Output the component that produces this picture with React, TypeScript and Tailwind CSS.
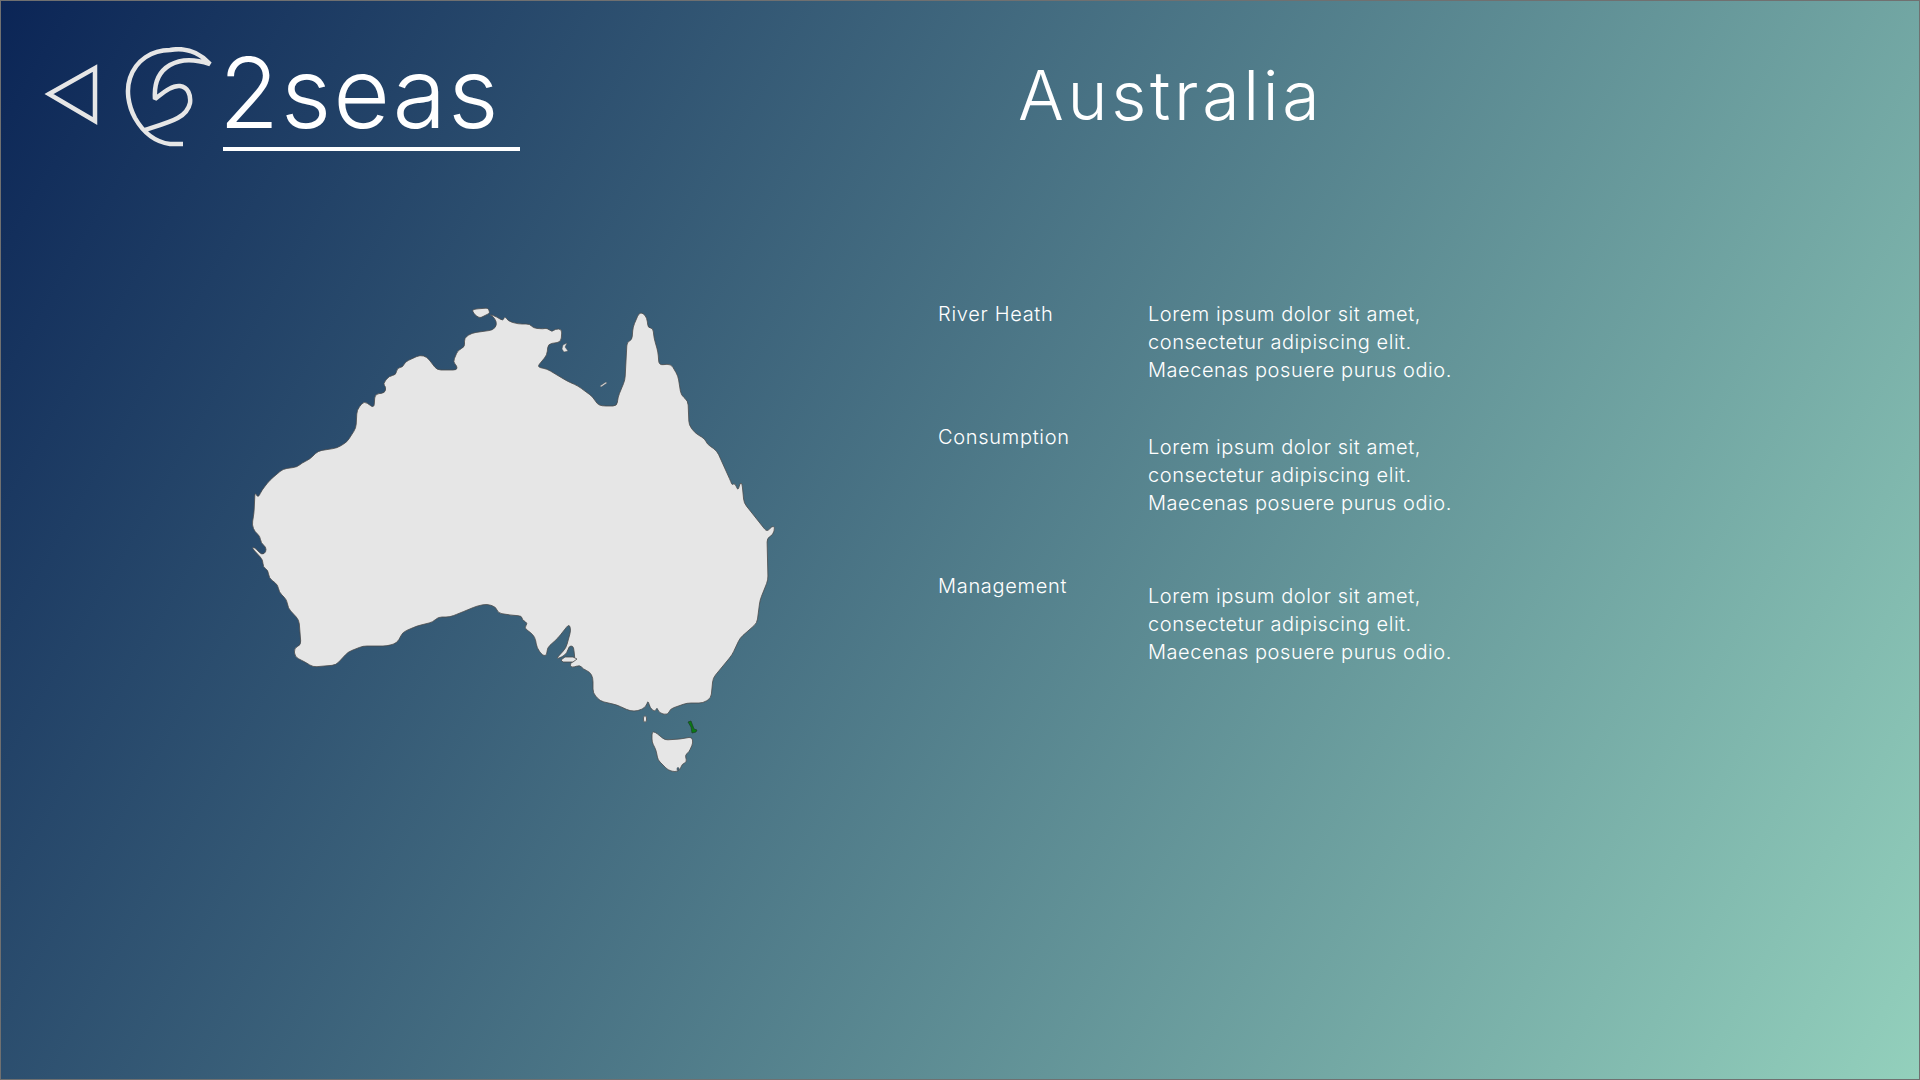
const LOREM = ["Lorem ipsum dolor sit amet,", "consectetur adipiscing elit.", "Maecenas posuere purus odio."];

const rows = [
  { label: "River Heath", textPad: "pt-0", gap: "mb-[39px]" },
  { label: "Consumption", textPad: "pt-[10px]", gap: "mb-[55px]" },
  { label: "Management", textPad: "pt-[10px]", gap: "mb-0" },
];

const MAINLAND =
  "252 525 254 513 255 492 258 498 262 490 270 480 283 469 297 467 302 463 310 459 318 451 337 448 347 442 356 428 357 410 364 401 374 408 375 394 385 393 386 387 383 384 389 376 396 375 397 368 403 367 405 362 420 355 427 357 437 370 457 370 457 366 453 362 458 350 465 347 464 338 472 333 493 330 497 325 495 318 489 314 497 317 503 321 505 316 508 321 518 324 530 324 533 328 543 329 547 328 552 332 555 329 562 329 561 342 548 344 547 355 537 367 547 369 567 381 578 386 593 397 597 404 602 406 617 406 618 397 625 380 627 342 632 340 633 327 639 313 643 313 647 318 648 328 653 328 654 338 658 352 659 365 671 364 678 376 681 395 688 401 689 425 695 433 705 439 707 444 717 451 731 482 732 485 735 483 738 491 740 483 742 483 744 503 767 532 772 526 775 527 773 535 767 538 768 580 760 600 757 623 740 638 732 655 713 678 711 698 703 703 687 703 670 709 668 715 659 713 657 707 655 712 650 708 648 700 646 707 638 711 630 711 617 705 600 701 593 693 593 678 590 672 583 669 580 665 571 668 570 663 575 661 574 650 573 646 569 646 567 653 562 657 556 659 566 648 571 630 569 624 558 638 547 648 547 655 543 656 537 648 535 637 530 632 524 628 528 623 522 620 522 616 510 615 498 613 496 607 487 604 477 606 460 613 450 617 438 617 433 622 417 626 403 632 397 643 387 646 363 646 348 652 336 665 313 667 305 662 295 657 294 648 301 645 299 620 288 608 287 600 279 592 278 585 269 578 268 570 263 567 263 560 252 548 254 547 262 555 266 552 266 547 261 543 260 536 255 532";

function rounded(points: string, radius: number) {
  const n = points.trim().split(/\s+/).map(Number);
  const pts: [number, number][] = [];
  for (let i = 0; i < n.length; i += 2) pts.push([n[i], n[i + 1]]);
  const cut = (a: [number, number], b: [number, number]) => {
    const dx = b[0] - a[0];
    const dy = b[1] - a[1];
    const len = Math.hypot(dx, dy) || 1;
    const r = Math.min(radius, len / 2);
    return [a[0] + (dx / len) * r, a[1] + (dy / len) * r].map((v) => v.toFixed(2)).join(" ");
  };
  let d = "";
  pts.forEach((p, i) => {
    const prev = pts[(i + pts.length - 1) % pts.length];
    const next = pts[(i + 1) % pts.length];
    d += `${i === 0 ? "M" : "L"}${cut(p, prev)} Q${p[0]} ${p[1]} ${cut(p, next)} `;
  });
  return d + "Z";
}

function AustraliaMap() {
  return (
    <svg width="540" height="490" viewBox="240 300 540 490" className="ml-[239px] shrink-0">
      <g fill="#e6e6e6" stroke="#4a4a4a" strokeWidth="0.8" strokeLinejoin="round">
        <path d={rounded(MAINLAND, 4)} />
        <path d={rounded("472 310 476 309 488 308 490 313 480 318 475 315", 2)} />
        <path d="M561 660 L565 657 L573 657 L577 659 L573 662 L563 662 Z" />
        <path d={rounded("652 732 655 732 665 740 680 739 692 737 693 743 689 752 685 755 687 762 682 764 680 770 675 772 668 770 658 760 656 750 652 742", 3)} />
        <ellipse cx="645" cy="719" rx="1.6" ry="3.2" />
        <path d="M563 345 L567 343 L565 347 L568 351 L564 352 L562 349 Z" strokeWidth="0.4" />
        <path d="M600 386 L606 382 L607 383 L601 387 Z" strokeWidth="0.4" />
      </g>
      <ellipse cx="678" cy="769" rx="1" ry="1.6" fill="#4a6b7e" stroke="#33414d" strokeWidth="0.6" />
      <path d="M688 722 L691 721 L694 729 L697 730 L696 732 L692 733 L691 727 Z" fill="#0a7a14" stroke="#1c3d2a" strokeWidth="0.7" />
    </svg>
  );
}

export default function App() {
  return (
    <div className="h-[1080px] w-full overflow-hidden border border-[#707070] bg-[linear-gradient(120deg,#0b2556,#93d0bc)] font-['Inter',sans-serif] font-light text-white">
      <header className="flex h-[190px] items-start">
        <svg width="56" height="62" viewBox="43 63 56 62" className="ml-[42px] mt-[63px] shrink-0">
          <path d="M49 93 L95 67 L95 120 Z" fill="none" stroke="#e6e6e6" strokeWidth="4.5" />
        </svg>
        <svg width="92" height="100" viewBox="124 47 92 100" className="ml-[25px] mt-[46px] shrink-0">
          <path
            d="M183 144 L170 144 C155 142 143 132 135 118 C128 105 126 90 130 78 C136 60 152 50 170 50 C186 47 199 52 210 64 C198 60 182 58 170 65 C158 72 154 85 155 99 C163 93 172 85 180 86 C188 87 191 95 190 103 C187 118 170 122 145 130"
            fill="none"
            stroke="#e6e6e6"
            strokeWidth="4.5"
            strokeLinejoin="bevel"
          />
        </svg>
        <div className="ml-[7px] mt-[43px] h-[107px] w-[297px] border-b-4 border-white text-[98px] leading-[98px] tracking-[1.7px] indent-[-4px]">2seas</div>
        <h1 className="ml-[498px] mt-[60px] text-[68px] font-light leading-[68px] tracking-[3.7px]">Australia</h1>
      </header>
      <main className="flex items-start pt-[109px]">
        <AustraliaMap />
        <section className="ml-[158px] flex flex-col text-[20px] leading-[28px]">
          {rows.map((r) => (
            <div key={r.label} className={`flex ${r.gap}`}>
              <div className="w-[210px] tracking-[0.7px]">{r.label}</div>
              <div className={`tracking-[0.55px] ${r.textPad}`}>
                {LOREM.map((l) => (
                  <p key={l}>{l}</p>
                ))}
              </div>
            </div>
          ))}
        </section>
      </main>
    </div>
  );
}
